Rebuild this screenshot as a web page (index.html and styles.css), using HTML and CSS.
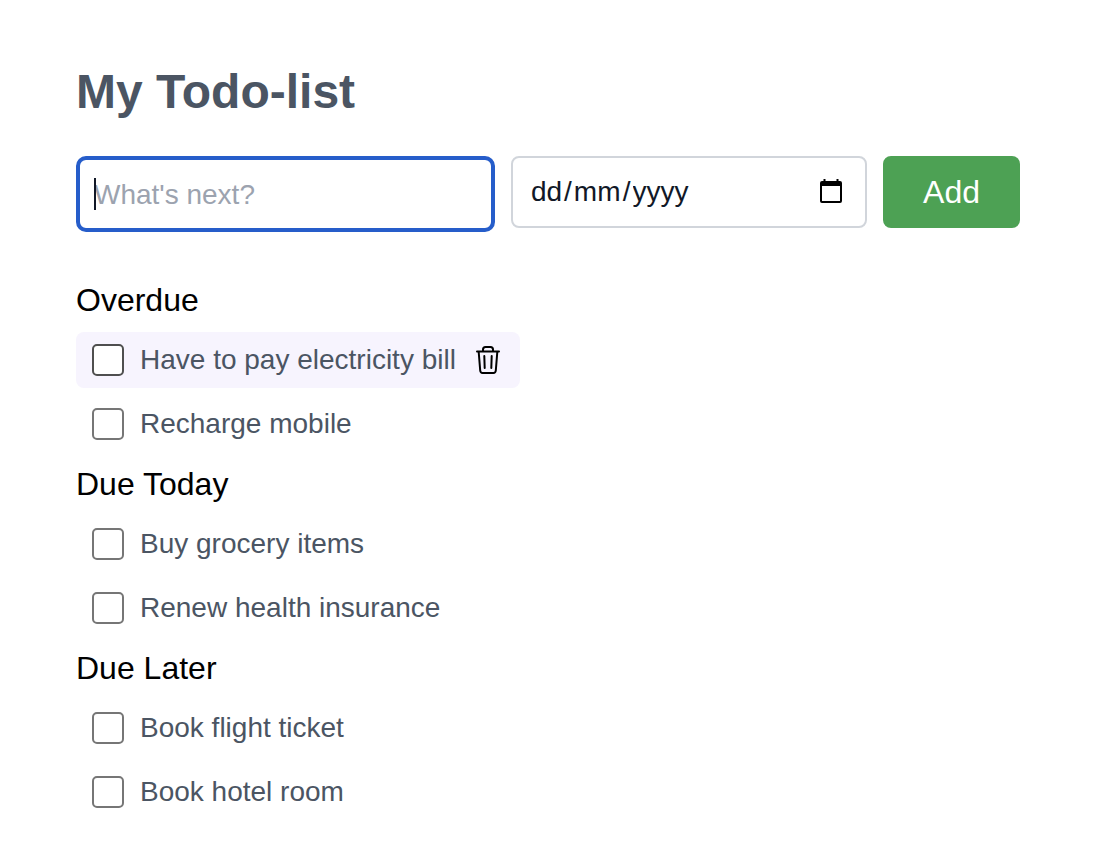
FILE: index.html
```html
<!DOCTYPE html>
<html lang="en">
<head>
<meta charset="utf-8">
<title>My Todo-list</title>
<link rel="stylesheet" href="styles.css">
</head>
<body>
<main class="page">
  <h1 class="title">My Todo-list</h1>
  <form class="new-todo">
    <div class="field">
      <input class="input" type="text" placeholder="What's next?" aria-label="New todo">
      <span class="caret"></span>
    </div>
    <div class="date-box" role="group" aria-label="Due date">
      <input class="date-part date-day" type="text" placeholder="dd" aria-label="Day">
      <span class="slash">/</span>
      <input class="date-part date-month" type="text" placeholder="mm" aria-label="Month">
      <span class="slash">/</span>
      <input class="date-part date-year" type="text" placeholder="yyyy" aria-label="Year">
      <button class="icon-button calendar" type="button" aria-label="Open calendar">
        <svg width="24" height="26" viewBox="0 0 24 26" fill="none"><path d="M5.500 0v3M18.500 0v3" stroke="#000" stroke-width="2"/><rect x="2" y="3" width="20" height="20" rx="1" stroke="#000" stroke-width="2"/><path d="M2 3h20v4H2z" fill="#000"/></svg>
      </button>
    </div>
    <button class="add" type="submit">Add</button>
  </form>
  <section class="group">
    <h2 class="group-title">Overdue</h2>
    <ul class="list">
      <li class="item item-hover">
        <label class="label"><input class="check" type="checkbox">Have to pay electricity bill</label>
        <button class="icon-button" type="button" aria-label="Delete">
          <svg width="32" height="32" viewBox="0 0 32 32" fill="none" stroke="#000" stroke-width="2" stroke-linecap="round" stroke-linejoin="round"><path d="M5 7.500h22M11 7V5.500Q11 3 13.500 3h5Q21 3 21 5.500V7M6.700 8l1.500 18.500Q8.500 29 10.500 29h11q2 0 2.300-2.500L25.300 8M12.300 12l.4 12M19.700 12l-.4 12"/></svg>
        </button>
      </li>
      <li class="item"><label class="label"><input class="check" type="checkbox">Recharge mobile</label></li>
    </ul>
  </section>
  <section class="group">
    <h2 class="group-title">Due Today</h2>
    <ul class="list">
      <li class="item"><label class="label"><input class="check" type="checkbox">Buy grocery items</label></li>
      <li class="item"><label class="label"><input class="check" type="checkbox">Renew health insurance</label></li>
    </ul>
  </section>
  <section class="group">
    <h2 class="group-title">Due Later</h2>
    <ul class="list">
      <li class="item"><label class="label"><input class="check" type="checkbox">Book flight ticket</label></li>
      <li class="item"><label class="label"><input class="check" type="checkbox">Book hotel room</label></li>
    </ul>
  </section>
</main>
</body>
</html>
```
FILE: styles.css
```css
* {
  box-sizing: border-box;
}

body {
  margin: 0;
  background: #fff;
  color: #000;
  font-family: "Liberation Sans", Arial, sans-serif;
}

.page {
  padding: 56px 78px 32px 76px;
}

.title {
  margin: 0 0 28px;
  font-size: 48px;
  line-height: 72px;
  font-weight: 700;
  color: #4b5563;
}

.new-todo {
  display: grid;
  grid-template-columns: minmax(0, 419fr) minmax(0, 356fr) auto;
  gap: 16px;
  align-items: start;
  margin: 0 0 44px;
}

.field {
  position: relative;
  display: flex;
}

.input {
  width: 100%;
  height: 76px;
  padding: 2px 14px 0;
  border: 4px solid #265dca;
  border-radius: 10px;
  outline: none;
  background: #fff;
  color: #111827;
  font: 28px "Liberation Sans", Arial, sans-serif;
}

.input::placeholder {
  color: #9ca3af;
  opacity: 1;
}

.caret {
  position: absolute;
  left: 18px;
  top: 22px;
  width: 2px;
  height: 32px;
  background: #111827;
}

.date-box {
  display: flex;
  align-items: center;
  height: 72px;
  padding: 0 22px 0 16px;
  border: 2px solid #d1d5db;
  border-radius: 8px;
  color: #111827;
  font-size: 28px;
  line-height: 32px;
}

.date-part {
  height: 32px;
  padding: 0 2px;
  border: 0;
  outline: none;
  background: none;
  color: inherit;
  font: inherit;
}

.date-part::placeholder {
  color: #111827;
  opacity: 1;
}

.date-day {
  width: 35px;
}

.date-month {
  width: 51px;
}

.date-year {
  width: 60px;
}

.icon-button {
  display: flex;
  padding: 0;
  border: 0;
  background: none;
}

.calendar {
  margin-left: auto;
}

.add {
  height: 72px;
  padding: 0 40px;
  border: 0;
  border-radius: 8px;
  background: #4da154;
  color: #fff;
  font: 32px "Liberation Sans", Arial, sans-serif;
}

.group {
  margin-bottom: 8px;
}

.group-title {
  margin: 0 0 8px;
  font-size: 32px;
  line-height: 48px;
  font-weight: 400;
}

.list {
  display: flex;
  flex-direction: column;
  align-items: flex-start;
  gap: 8px;
  margin: 0;
  padding: 0;
  list-style: none;
}

.item {
  display: flex;
  align-items: center;
  gap: 16px;
  padding: 8px 16px;
  border-radius: 8px;
}

.item-hover {
  background: #f7f4fe;
}

.label {
  display: flex;
  align-items: center;
  gap: 16px;
  font-size: 28px;
  line-height: 40px;
  color: #4b5563;
}

.check {
  appearance: none;
  width: 32px;
  height: 32px;
  margin: 0;
  border: 2px solid #767676;
  border-radius: 5px;
  background: #fff;
}

.item-hover .check {
  border-color: #4f4f4f;
}
```
